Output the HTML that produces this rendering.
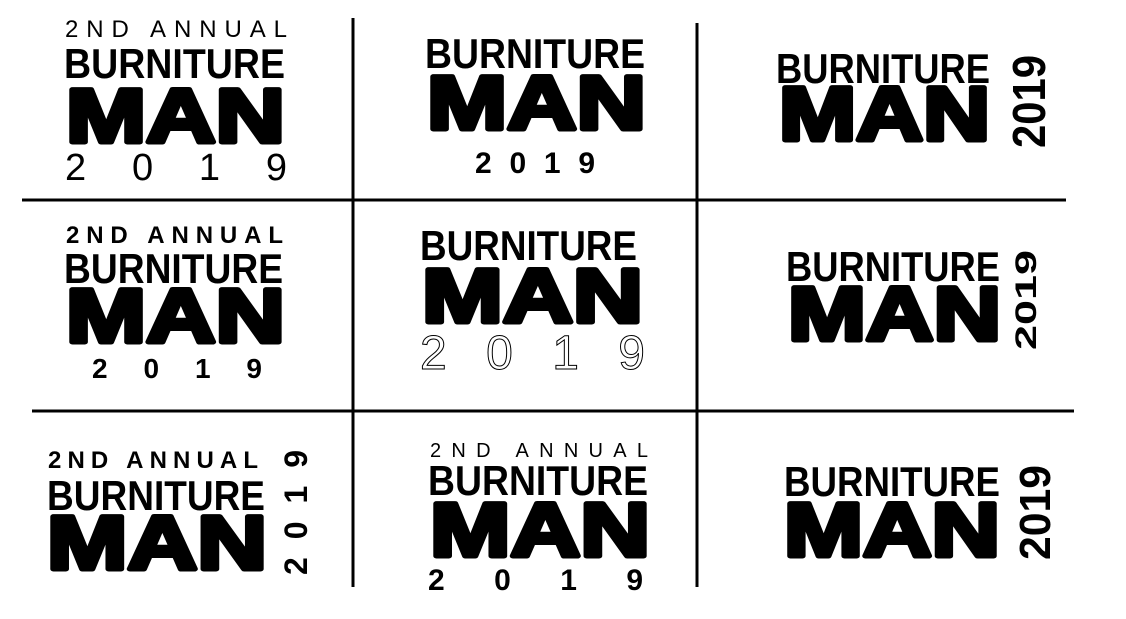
<!DOCTYPE html>
<html><head><meta charset="utf-8"><style>
html,body{margin:0;padding:0;background:#fff;width:1126px;height:619px;overflow:hidden}
svg{display:block}
text{font-family:"Liberation Sans",sans-serif}
.b{font-weight:bold;font-size:42px}
.m{font-weight:bold;font-size:76px;stroke:#000;stroke-width:5;stroke-linejoin:round}
.t{font-weight:normal}
.h{font-weight:bold}
</style></head><body>
<svg width="1126" height="619" viewBox="0 0 1126 619">
<g stroke="#000" stroke-width="3">
<line x1="353" y1="18" x2="353" y2="200"/>
<line x1="353" y1="200" x2="353" y2="587"/>
<line x1="697" y1="23" x2="697" y2="587"/>
<line x1="22" y1="200" x2="1066" y2="200"/>
<line x1="32" y1="411" x2="1074" y2="411"/>
</g>
<!-- cell 1 -->
<text class="t" x="65" y="37" font-size="24" textLength="222" lengthAdjust="spacing">2ND ANNUAL</text>
<text class="b" x="64" y="78" textLength="221" lengthAdjust="spacingAndGlyphs">BURNITURE</text>
<text class="m" x="66" y="142" textLength="219" lengthAdjust="spacingAndGlyphs">MAN</text>
<text class="t" x="65" y="180" font-size="38" textLength="222" lengthAdjust="spacing">2019</text>
<!-- cell 2 -->
<text class="b" x="425" y="68" textLength="220" lengthAdjust="spacingAndGlyphs">BURNITURE</text>
<text class="m" x="427" y="129" textLength="219" lengthAdjust="spacingAndGlyphs">MAN</text>
<text class="h" x="475" y="173" font-size="30" textLength="120" lengthAdjust="spacing">2019</text>
<!-- cell 3 -->
<text class="b" x="776" y="83" textLength="214" lengthAdjust="spacingAndGlyphs">BURNITURE</text>
<text class="m" x="779" y="140" textLength="211" lengthAdjust="spacingAndGlyphs">MAN</text>
<text class="h" transform="translate(1045,148) rotate(-90)" font-size="46" textLength="93" lengthAdjust="spacingAndGlyphs">2019</text>
<!-- row 2 cell 1 -->
<text class="h" x="66" y="243" font-size="24" textLength="217" lengthAdjust="spacing">2ND ANNUAL</text>
<text class="b" x="64" y="283" textLength="219" lengthAdjust="spacingAndGlyphs">BURNITURE</text>
<text class="m" x="66" y="342" textLength="219" lengthAdjust="spacingAndGlyphs">MAN</text>
<text class="h" x="92" y="378" font-size="28" textLength="170" lengthAdjust="spacing">2019</text>
<!-- cell 5 -->
<text class="b" x="420" y="260" textLength="217" lengthAdjust="spacingAndGlyphs">BURNITURE</text>
<text class="m" x="422" y="322" textLength="221" lengthAdjust="spacingAndGlyphs">MAN</text>
<text x="420" y="369" font-size="48" fill="none" stroke="#000" stroke-width="1" textLength="225" lengthAdjust="spacing">2019</text>
<!-- cell 6 -->
<text class="b" x="786" y="281" textLength="214" lengthAdjust="spacingAndGlyphs">BURNITURE</text>
<text class="m" x="788" y="340" textLength="213" lengthAdjust="spacingAndGlyphs">MAN</text>
<text class="h" transform="translate(1036,350) rotate(-90)" font-size="30" textLength="100" lengthAdjust="spacingAndGlyphs">2019</text>
<!-- row 3 cell 1 -->
<text class="h" x="48" y="468" font-size="24" textLength="210" lengthAdjust="spacing">2ND ANNUAL</text>
<text class="b" x="47" y="510" textLength="218" lengthAdjust="spacingAndGlyphs">BURNITURE</text>
<text class="m" x="47" y="569" textLength="220" lengthAdjust="spacingAndGlyphs">MAN</text>
<text class="h" transform="translate(307,575) rotate(-90)" font-size="32" textLength="125" lengthAdjust="spacing">2019</text>
<!-- cell 8 -->
<text class="t" x="430" y="457" font-size="20" textLength="218" lengthAdjust="spacing">2ND ANNUAL</text>
<text class="b" x="428" y="495" textLength="220" lengthAdjust="spacingAndGlyphs">BURNITURE</text>
<text class="m" x="430" y="556" textLength="220" lengthAdjust="spacingAndGlyphs">MAN</text>
<text class="h" x="428" y="590" font-size="30" textLength="215" lengthAdjust="spacing">2019</text>
<!-- cell 9 -->
<text class="b" x="784" y="496" textLength="216" lengthAdjust="spacingAndGlyphs">BURNITURE</text>
<text class="m" x="784" y="556" textLength="216" lengthAdjust="spacingAndGlyphs">MAN</text>
<text class="h" transform="translate(1050,560) rotate(-90)" font-size="44" textLength="95" lengthAdjust="spacingAndGlyphs">2019</text>
</svg>
</body></html>
